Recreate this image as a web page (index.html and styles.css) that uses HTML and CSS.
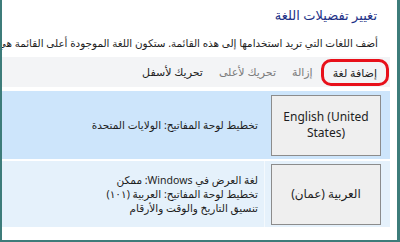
FILE: index.html
```html
<!DOCTYPE html>
<html lang="ar" dir="rtl">
<head>
  <meta charset="UTF-8">
  <title>تغيير تفضيلات اللغة</title>
  <link rel="stylesheet" href="styles.css">
</head>
<body>

<div id="panel">
  <h1 class="title">تغيير تفضيلات اللغة</h1>
  <div class="descWrap">
    <p class="desc">أضف اللغات التي تريد استخدامها إلى هذه القائمة. ستكون اللغة الموجودة أعلى القائمة هي</p>
  </div>

  <div class="toolbar">
    <span class="tool marked">إضافة لغة</span>
    <span class="tool off">إزالة</span>
    <span class="tool off">تحريك لأعلى</span>
    <span class="tool">تحريك لأسفل</span>
  </div>

  <div class="langList">
    <div class="langRow selected">
      <div class="langCell">
        <button class="langBtn" dir="ltr">English (United States)</button>
      </div>
      <div class="infoCell">
        <p>تخطيط لوحة المفاتيح: الولايات المتحدة</p>
      </div>
    </div>
    <div class="langRow">
      <div class="langCell">
        <button class="langBtn">العربية (عمان)</button>
      </div>
      <div class="infoCell">
        <p>لغة العرض في Windows: ممكن</p>
        <p>تخطيط لوحة المفاتيح: العربية (١٠١)</p>
        <p>تنسيق التاريخ والوقت والأرقام</p>
      </div>
    </div>
  </div>
</div>

</body>
</html>
```

FILE: styles.css
```css
body, html {
  margin: 0;
  background: #fff;
  font-family: "Noto Sans", "DejaVu Sans", sans-serif;
  overflow: hidden;
}
#panel {
  height: 242px;
  box-sizing: border-box;
  border-style: solid;
  border-color: #3d7c7a;
  border-width: 0 3px 2px 2px;
  overflow: hidden;
  direction: rtl;
}
.title {
  margin: 6px 20px 0 0;
  font-size: 13px;
  font-weight: normal;
  color: #1e3287;
  line-height: 18px;
}
.descWrap {
  margin: 11px 19px 0 0;
  overflow: hidden;
}
.desc {
  margin: 0;
  font-size: 10.4px;
  line-height: 16px;
  color: #1e1e1e;
  white-space: nowrap;
}
.toolbar {
  display: flex;
  align-items: center;
  height: 30px;
  margin: 6px 7px 0 0;
  background: #f3f4f6;
  font-size: 11px;
  color: #1e1e1e;
}
.tool {
  padding: 0 8px;
  line-height: 20px;
}
.tool.off {
  color: #7b7b7b;
}
.tool.marked {
  margin-right: 1px;
  padding: 0 9px;
  border: 3px solid #e8101a;
  border-radius: 10px;
  line-height: 21px;
}
.langList {
  margin: 4px 7px 0 0;
  display: flex;
  flex-direction: column;
  gap: 2px;
}
.langRow {
  display: flex;
  background: #e5f1fb;
  gap: 1px;
}
.langRow.selected {
  background: #cde5fb;
  height: 68px;
}
.langRow + .langRow {
  height: 66px;
}
.langCell {
  width: 126px;
  display: flex;
  align-items: center;
  justify-content: flex-start;
  padding-right: 9px;
  box-sizing: border-box;
}
.langRow:not(.selected) .langCell {
  border-left: 1px solid #f4f9fd;
}
.langBtn {
  width: 110px;
  height: 61px;
  background: #efefef;
  border: 1px solid #8c8c8c;
  font-family: "Noto Sans", "DejaVu Sans", sans-serif;
  font-size: 12px;
  line-height: 16px;
  color: #1e1e1e;
  padding: 0 6px;
}
.infoCell {
  flex: 1;
  display: flex;
  flex-direction: column;
  justify-content: center;
  padding-right: 5px;
}
.infoCell p {
  margin: 0;
  font-size: 10.5px;
  line-height: 14px;
  color: #1e1e1e;
}
```
